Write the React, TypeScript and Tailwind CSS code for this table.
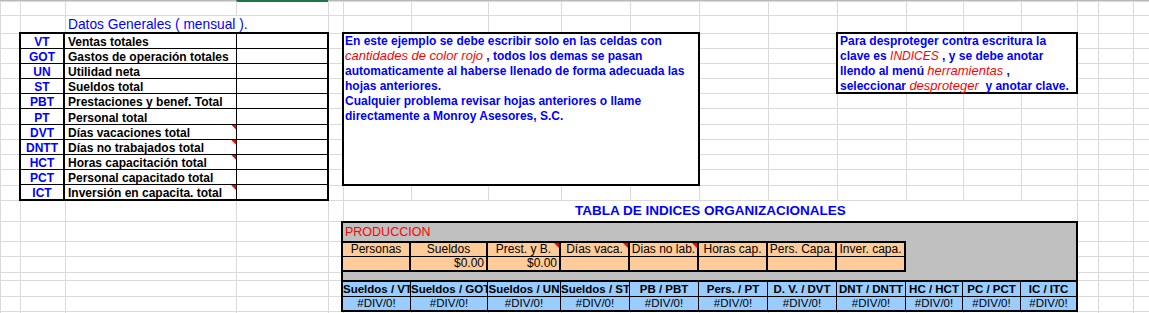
const generales = [
  { code: "VT", label: "Ventas totales" },
  { code: "GOT", label: "Gastos de operación totales" },
  { code: "UN", label: "Utilidad neta" },
  { code: "ST", label: "Sueldos total" },
  { code: "PBT", label: "Prestaciones y benef. Total" },
  { code: "PT", label: "Personal total" },
  { code: "DVT", label: "Días vacaciones total", note: true },
  { code: "DNTT", label: "Días no trabajados total", note: true },
  { code: "HCT", label: "Horas capacitación total", note: true },
  { code: "PCT", label: "Personal capacitado total" },
  { code: "ICT", label: "Inversión en capacita. total", note: true },
]

// peach input block (last cell leaves room for the block's right border)
const produccion = [
  { label: "Personas", value: "", w: "w-[68px] border-r-2" },
  { label: "Sueldos", value: "$0.00", w: "w-[77px] border-r-2" },
  { label: "Prest. y B.", value: "$0.00", w: "w-[73px] border-r-2", note: true },
  { label: "Días vaca.", value: "", w: "w-[69px] border-r-2", note: true },
  { label: "Dias no lab.", value: "", w: "w-[69px] border-r-2", note: true },
  { label: "Horas cap.", value: "", w: "w-[69px] border-r-2" },
  { label: "Pers. Capa.", value: "", w: "w-[69px] border-r-2" },
  { label: "Inver. capa.", value: "", w: "w-[67px]" },
]

const indices = [
  { label: "Sueldos / VT", w: "w-[68px] border-r" },
  { label: "Sueldos / GOT", w: "w-[77px] border-r" },
  { label: "Sueldos / UN", w: "w-[73px] border-r" },
  { label: "Sueldos / ST", w: "w-[69px] border-r" },
  { label: "PB / PBT", w: "w-[69px] border-r" },
  { label: "Pers. / PT", w: "w-[69px] border-r" },
  { label: "D. V. / DVT", w: "w-[69px] border-r" },
  { label: "DNT / DNTT", w: "w-[69px] border-r" },
  { label: "HC / HCT", w: "w-[57px] border-r" },
  { label: "PC / PCT", w: "w-[58px] border-r" },
  { label: "IC / ITC", w: "flex-1" },
]

const gridCells = Array.from({ length: 19 * 23 }, (_, i) => i)

// little red comment marker in the corner of a cell
function Marker() {
  return (
    <span className="absolute top-0 right-0 h-[5px] w-[5px] bg-[#ff0000] [clip-path:polygon(0_0,100%_0,100%_100%)]" />
  )
}

function Red({ children, size = "text-[13px]" }: { children: React.ReactNode; size?: string }) {
  return <span className={`${size} leading-none font-normal italic text-[#ff0000]`}>{children}</span>
}

export default function App() {
  return (
    <div className="h-[313px] overflow-hidden bg-white font-[Liberation_Sans,Arial,sans-serif] text-black">
      <div className="grid grid-cols-[20px_45px_171px_92px_15px_68px_77px_73px_69px_69px_69px_69px_69px_57px_58px_56px_21px_35px_16px] grid-rows-[14px_18px_15px_15px_15px_15px_15px_16px_15px_15px_15px_16px_15px_21px_20px_15px_16px_8px_16px_15px_20px] auto-rows-[20px] border-t border-[#b9b9b9]">
        {/* sheet gridlines */}
        {gridCells.map((i) => (
          <div key={i} className="border-t border-l border-[#dadada]" />
        ))}

        {/* selected cell edge */}
        <div className="col-start-4 row-start-1 -mt-px border-l border-[#dadada] border-t-2 border-t-[#217346]" />

        {/* Datos generales */}
        <div className="col-start-3 col-span-2 row-start-2 flex items-center border-t border-l border-[#dadada] pl-[2px] text-[13.75px] leading-none whitespace-nowrap text-[#0000ff]">
          Datos Generales ( mensual ).
        </div>

        <div className="col-start-2 col-span-3 row-start-3 row-span-11 -m-px flex flex-col border-2 border-black bg-white">
          {generales.map((r) => (
            <div key={r.code} className="flex flex-1 border-b border-black last:border-b-0">
              <div className="flex w-[44px] items-end justify-center border-r-2 border-black text-[12px] leading-none font-bold text-[#0000ff]">
                {r.code}
              </div>
              <div className="relative flex w-[172px] items-end border-r border-black pl-[3px] text-[12px] leading-none font-bold whitespace-nowrap">
                {r.label}
                {r.note && <Marker />}
              </div>
              <div className="flex-1" />
            </div>
          ))}
        </div>

        {/* text box: instrucciones */}
        <div className="col-start-6 col-span-5 row-start-3 row-span-10 -m-px border-2 border-black bg-white px-[1px] text-[12px] leading-[15px] font-bold whitespace-nowrap text-[#0000ff]">
          <div>En este ejemplo se debe escribir solo en las celdas con</div>
          <div>
            <Red>cantidades de color rojo</Red> , todos los demas se pasan
          </div>
          <div>automaticamente al haberse llenado de forma adecuada las</div>
          <div>hojas anteriores.</div>
          <div>Cualquier problema revisar hojas anteriores o llame</div>
          <div>directamente a Monroy Asesores, S.C.</div>
        </div>

        {/* text box: clave */}
        <div className="col-start-13 col-span-4 row-start-3 row-span-4 -m-px border-2 border-black bg-white px-[2px] text-[12px] leading-[15px] font-bold whitespace-nowrap text-[#0000ff]">
          <div>Para desproteger contra escritura la</div>
          <div>
            clave es <Red size="text-[12px]">INDICES</Red> , y se debe anotar
          </div>
          <div>
            llendo al menú <Red>herramientas</Red> ,
          </div>
          <div>
            seleccionar <Red>desproteger</Red>&nbsp; y anotar clave.
          </div>
        </div>

        {/* tabla de indices */}
        <div className="col-start-6 col-span-11 row-start-14 flex items-center justify-center border-t border-l border-[#dadada] text-[13.5px] leading-none font-bold whitespace-nowrap text-[#0000ff]">
          TABLA DE INDICES ORGANIZACIONALES
        </div>

        <div className="col-start-6 col-span-11 row-start-15 row-span-6 -mr-px -mb-px -ml-[2px] flex flex-col border-2 border-black bg-[#c0c0c0]">
          <div className="flex h-[18px] shrink-0 items-center pl-[2px] text-[12.5px] leading-none text-[#ff0000]">
            PRODUCCION
          </div>

          <div className="flex h-[31px] shrink-0">
            <div className="flex flex-col border-y-2 border-r-2 border-black bg-[#ffcc99] text-[12px] leading-[13px]">
              <div className="flex h-[14px] border-b border-black">
                {produccion.map((c) => (
                  <div key={c.label} className={`relative ${c.w} overflow-hidden border-black text-center whitespace-nowrap`}>
                    {c.label}
                    {c.note && <Marker />}
                  </div>
                ))}
              </div>
              <div className="flex flex-1">
                {produccion.map((c) => (
                  <div key={c.label} className={`${c.w} border-black pr-[2px] text-right whitespace-nowrap`}>
                    {c.value}
                  </div>
                ))}
              </div>
            </div>
          </div>

          <div className="h-[8px] shrink-0" />

          <div className="flex h-[16px] shrink-0 border-t-2 border-black bg-[#99ccff] text-[11.5px] leading-[14px] font-bold">
            {indices.map((c) => (
              <div key={c.label} className={`${c.w} overflow-hidden border-black text-center whitespace-nowrap`}>
                {c.label}
              </div>
            ))}
          </div>
          <div className="flex flex-1 border-t border-black bg-[#99ccff] text-[11.5px] leading-[13px]">
            {indices.map((c) => (
              <div key={c.label} className={`${c.w} border-black text-center whitespace-nowrap`}>
                #DIV/0!
              </div>
            ))}
          </div>
        </div>
      </div>
    </div>
  )
}
